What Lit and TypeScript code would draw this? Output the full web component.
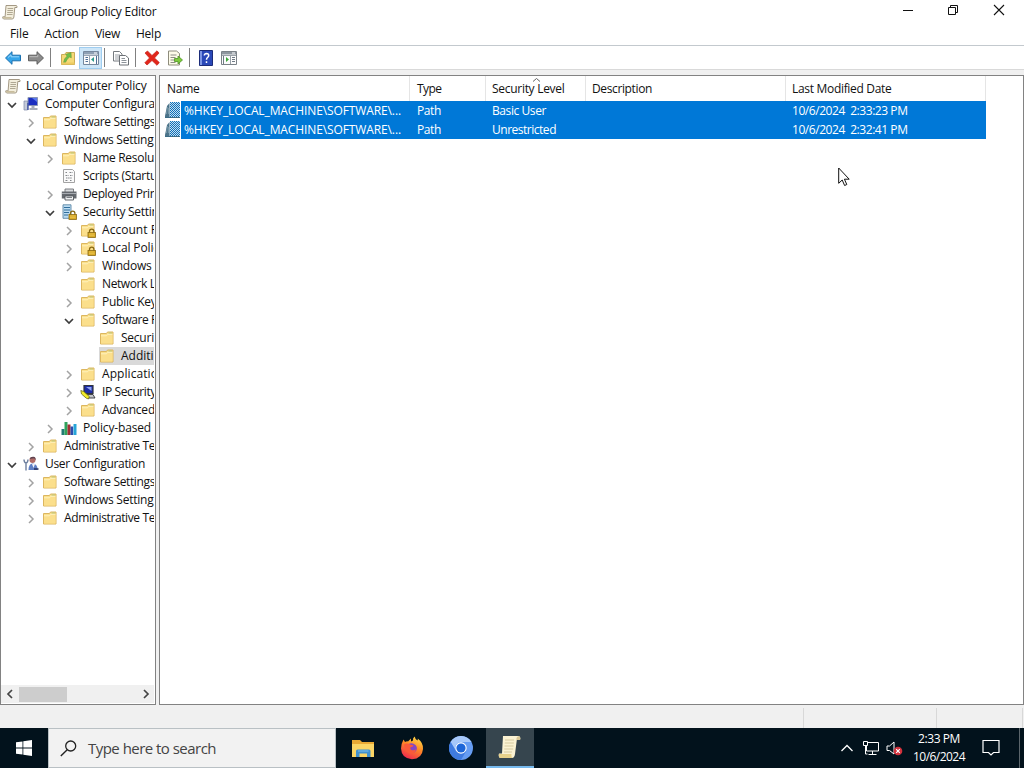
import { LitElement, html, svg, css, nothing } from "lit";
import { customElement, property } from "lit/decorators.js";

/* A text run whose tracking is adjusted so that it spans a given width. */
@customElement("fit-text")
class FitText extends LitElement {
  static styles = css`
    :host { display: inline-block; white-space: pre; flex: none; }
  `;
  @property({ type: Number }) w = 0;
  @property() text = "";
  render() {
    return html`<span>${this.text}</span>`;
  }
  updated() {
    const span = this.renderRoot.querySelector("span") as HTMLElement;
    span.style.letterSpacing = "0px";
    if (!this.w) return;
    const natural = span.getBoundingClientRect().width;
    span.style.letterSpacing = `${(this.w - natural) / this.text.length}px`;
  }
}

const t = (text: string, w: number) => html`<fit-text .text=${text} .w=${w}></fit-text>`;

const ic = (body: unknown, size = 16) =>
  html`<svg class="ic" width=${size} height=${size} viewBox="0 0 16 16">${body}</svg>`;

const scroll = svg`
  <path d="M4 1.500h10.200q1.300.4.800 2h-2.200l-.9 9.500q-.2 2-1.800 2H1.600q-1.200-.6-.8-2.200h2.300z" fill="#f3eedd" stroke="#9a8f78" stroke-width=".9"/>
  <path d="M5.600 4.500h5.600M5.400 6.500H11M5.200 8.500h5.600M5 10.500h5.500" stroke="#a89f8a" stroke-width=".9"/>
  <path d="M1 13h8.500v1.500H1.500z" fill="#c9bd9d"/>`;

const folder = svg`
  <path d="M1.500 3.500h6l1-1.500h5.500v12H1.500z" fill="#fbe08a" stroke="#dcb660"/>
  <path d="M2 6h5.500l1.300-1.500H13.500V13.500H2z" fill="#fbdf8c"/>
  <path d="M2 5.800h5.500l1.300-1.500H13.500" fill="none" stroke="#fff3c4" stroke-width=".9"/>
  <path d="M9.500 3h3.500" stroke="#a9c27a" stroke-width=".8"/>`;

const lock = svg`
  <path d="M9.500 11V9.300a2.200 2.200 0 0 1 4.400 0V11" fill="none" stroke="#8a6a14" stroke-width="1.300"/>
  <rect x="8" y="10.500" width="7.500" height="5" fill="#d9a821" stroke="#8a6a14" stroke-width=".8"/>
  <path d="M9 12h5.500M9 13.700h5.500" stroke="#f3d36b" stroke-width=".6"/>`;

const icons: Record<string, unknown> = {
  scroll,
  folder,
  lockfolder: svg`${folder}${lock}`,
  computer: svg`
    <path d="M5 1.500h9.500v8H5z" fill="#1c2fc0" stroke="#8a94b4"/>
    <path d="M9 2h5v4z" fill="#5a78ee"/>
    <path d="M8.500 10h3v2h-3zM6.500 12h8v2h-8z" fill="#a9aeb9"/>
    <path d="M1 5h3.500v9H1z" fill="#c3cad8" stroke="#7d88a6" stroke-width=".7"/>
    <path d="M5 7v7" stroke="#3449a0" stroke-width="1.300"/>`,
  user: svg`
    <circle cx="9.500" cy="4" r="3" fill="#b06b66"/>
    <path d="M6.500 3q1-2.500 4-2.200 2.500.4 2.200 3.500l-1.500-2z" fill="#5e4350"/>
    <path d="M5.500 14q0-6 4-6.500 5 .2 5.200 6.500z" fill="#5f7fc4"/>
    <path d="M9 8l1.500 4L12 8z" fill="#f3f3f8"/>
    <path d="M1 3.500q0 3 2 3.500 2-.5 2-3.500M3 7v7.500" fill="none" stroke="#6d7f9e" stroke-width="1.400"/>
    <path d="M11 13h4.500" stroke="#27315f" stroke-width="1.500"/>`,
  script: svg`
    <path d="M2.500 1.500h9l2 2v11h-11z" fill="#fafafa" stroke="#a3a3a3"/>
    <path d="M4.500 4.500h2M8.500 4.500h3M4.500 7.500h3M9 7.500h2.500M5 10h6M4.500 12.500h2.500M9 12.500h2" stroke="#83868a" stroke-dasharray="1.500 .6"/>`,
  printer: svg`
    <path d="M4 3h8.500v4H4z" fill="#d7d9dc" stroke="#6f7377" stroke-width=".9"/>
    <path d="M.8 5.500h14.700v7H.8z" fill="#65696f"/>
    <path d="M1 7.500h14" stroke="#a7abb1"/>
    <path d="M4 10h8.500v4H4z" fill="#f3f4f5" stroke="#54585d" stroke-width=".9"/>
    <path d="M5.500 11.500h5.500" stroke="#7c8085"/>`,
  server: svg`
    <path d="M2 .8h8v13.500H2z" fill="#bcdcf1" stroke="#5c87a6" stroke-width=".9"/>
    <path d="M3 3.500h6M3 6h6M3 8.500h5M3 11h4" stroke="#2e6d9c" stroke-width="1.100"/>${lock}`,
  ipsec: svg`
    <path d="M4 1.500h9v8H4z" fill="#1d2ca6" stroke="#30343c" stroke-width="1.200"/>
    <path d="M6 3h5.500v4z" fill="#8ea3f0"/>
    <path d="M6.500 10.500H13l2 3.500H8z" fill="#c3c6c9" stroke="#33363c" stroke-width=".9"/>
    <path d="M.8 6.500l3 1 5.500 5-.8 2.500-2.200-.8L1.500 10z" fill="#f1ea2a" stroke="#5c5a10" stroke-width=".7"/>`,
  bars: svg`
    <path d="M.5 9h3v6h-3z" fill="#237b74"/><path d="M3.500 2h3v13h-3z" fill="#2fa35d"/>
    <path d="M6.500 4.500h3V15h-3z" fill="#a12f35"/><path d="M9.500 6.500h2.700V15H9.500z" fill="#2d4caa"/>
    <path d="M12.500 4h3v11h-3z" fill="#27a5d8"/>`,
  back: svg`<path d="M.5 8L7 1.700v3.500h8.500v5.600H7v3.500z" fill="#35a5ea" stroke="#1a6fae"/><path d="M3 7.500l3-2.700v2h8" fill="none" stroke="#9bd6fa"/>`,
  forward: svg`<path d="M15.500 8L9 1.700v3.500H.5v5.600H9v3.500z" fill="#8b8b8b" stroke="#5c5c5c"/><path d="M1.500 6.700h8.300v-2" fill="none" stroke="#bdbdbd"/>`,
  up: svg`<path d="M1.500 4.500h3l1.500-2h8.500v12h-13z" fill="#f6d977" stroke="#c9ab57"/><path d="M3.500 12.500Q4 8.500 7.200 6L5.500 4.500l5.500-2 .3 5.300L9.600 7Q6.500 9 5.500 12.500z" fill="#6fbf4a" stroke="#6f9a3d" stroke-width=".6"/><path d="M1.500 12.500h13v2h-13z" fill="#eccb62"/>`,
  treeview: svg`<path d="M.5 1.500h15v13H.5z" fill="#fcfcfc" stroke="#75889e"/><path d="M1 2h14v2.500H1z" fill="#8ea0b4"/><path d="M11 3h3" stroke="#fff"/><path d="M6.500 5v9M1 5.500h14" stroke="#9aa7b5"/><path d="M2.500 7.500h2.500M2.500 9.500h2.500M2.500 11.500h2.500M13.500 6v8" stroke="#4f6f97"/><path d="M11 7v5L8 9.500z" fill="#2b9a8b"/>`,
  copy: svg`<path d="M.5 1.500h6l2.500 2.500v7H.5z" fill="#fff" stroke="#767b80"/><path d="M2 5h5M2 7h5M2 9h5" stroke="#9da2a8"/><path d="M6.500 5.500h6L15.500 8v7h-9z" fill="#fff" stroke="#6c7176"/><path d="M8.500 8.500h3.500M8.500 10.500h5M8.500 12.500h5" stroke="#8d939a"/>`,
  del: svg`<path d="M1 3l2.500-2L8 5.500 13 .8 15 3l-4.500 5 4.800 4.500-2.300 2.800L8 10.500 3 15 .8 12.800 5.500 8z" fill="#e2261b" stroke="#c4221a" stroke-width=".7"/>`,
  exportlist: svg`<path d="M1.500 1h8l3 2.500V15h-11z" fill="#fdfbe9" stroke="#8e8c7c"/><path d="M3.500 5h6M3.500 7.500h5M3.500 10h4M3.500 12.500h5" stroke="#8d8d86"/><path d="M7.500 8.500h3.500V6l4.500 4-4.500 4v-2.500H7.500z" fill="#7ecb3c" stroke="#4c9325" stroke-width=".8"/>`,
  pane: svg`<path d="M.5 1.500h15v13H.5z" fill="#fcfcfc" stroke="#7b8288"/><path d="M1 2h14v2.500H1z" fill="#8e979f"/><path d="M11 3h3" stroke="#fff"/><path d="M9.500 5v9M1 5.500h14" stroke="#99a1a8"/><path d="M11 7.500h3M11 9.500h3M11 11.500h3M2.500 6v8" stroke="#6f7a85"/><path d="M5 7v5l3-2.500z" fill="#3ea83a"/>`,
  policy: svg`
    <path d="M5 0h10v15H4z" fill="#c4dff0"/>
    <path d="M5 .5h10M5 2.500h10M5 4.500h10M5 6.500h10M5 8.500h10M5 10.500h10M5 12.500h10M5 14.500h10" stroke="#0f6fb8" stroke-dasharray="1 1"/>
    <path d="M6 1.500h9M6 3.500h9M6 5.500h9M6 7.500h9M6 9.500h9M6 11.500h9M6 13.500h9" stroke="#0f6fb8" stroke-dasharray="1 1"/>
    <path d="M2 4L4.500 1v14H-.2z" fill="#4b7389"/>
    <path d="M2.500 5l-1 7M3.500 6v6" stroke="#86a5b5" stroke-width=".7"/>
    <path d="M0 15.500h15" stroke="#3c6c86"/>`,
};

type Node = [level: number, state: "" | "open" | "closed", icon: string, label: string, width: number];
const nodes: Node[] = [
  [0, "", "scroll", "Local Computer Policy", 120.5],
  [1, "open", "computer", "Computer Configura", 110],
  [2, "closed", "folder", "Software Settings", 91],
  [2, "open", "folder", "Windows Setting", 89.5],
  [3, "closed", "folder", "Name Resolut", 75],
  [3, "", "script", "Scripts (Startup", 81],
  [3, "closed", "printer", "Deployed Print", 77.5],
  [3, "open", "server", "Security Settin", 75.5],
  [4, "closed", "lockfolder", "Account P", 56],
  [4, "closed", "lockfolder", "Local Polic", 57],
  [4, "closed", "folder", "Windows", 49.5],
  [4, "", "folder", "Network L", 53.5],
  [4, "closed", "folder", "Public Key", 54.5],
  [4, "open", "folder", "Software R", 56],
  [5, "", "folder", "Securit", 37],
  [5, "", "folder", "Additi", 32.5],
  [4, "closed", "folder", "Applicatio", 56],
  [4, "closed", "ipsec", "IP Security", 54],
  [4, "closed", "folder", "Advanced", 53],
  [3, "closed", "bars", "Policy-based", 68],
  [2, "closed", "folder", "Administrative Te", 91],
  [1, "open", "user", "User Configuration", 100],
  [2, "closed", "folder", "Software Settings", 91],
  [2, "closed", "folder", "Windows Setting", 89.5],
  [2, "closed", "folder", "Administrative Te", 91],
];

@customElement("app-root")
class AppRoot extends LitElement {
  static styles = css`
    :host { display: flex; flex-direction: column; width: 1024px; height: 768px; overflow: hidden; position: relative;
      background: #f0f0f0; color: #111; font: 12px/18px "Open Sans", "Noto Sans", sans-serif; cursor: default; }
    * { box-sizing: border-box; }
    svg { display: block; flex: none; }
    .title { height: 24px; background: #fff; display: flex; align-items: center; padding-left: 2px; gap: 5px; flex: none; }
    .controls { margin-left: auto; display: flex; padding-right: 2px; }
    .controls svg { margin-bottom: 4px; }
    .menu { height: 21px; background: #fff; display: flex; padding: 1px 0 0 10px; flex: none; gap: 16px; }
    .tools { height: 25px; background: #fff; border-top: 1px solid #c3c9ce; border-bottom: 1px solid #d9d9d9; display: flex; align-items: center; flex: none; padding-left: 5px; }
    .sep { width: 1px; height: 19px; background: #808080; flex: none; }
    .tool { width: 23px; height: 22px; display: flex; align-items: center; justify-content: center; flex: none; }
    .tool.on { background: #cde6f8; border: 1px solid #9fcdf0; }
    .work { display: flex; gap: 3px; height: 630px; margin-top: 5px; flex: none; }
    .tree { width: 156px; border: 1px solid #828282; background: #fff; display: flex; flex-direction: column; justify-content: space-between; padding: 1px 1px 1px 0; overflow: hidden; }
    .node { display: flex; height: 18px; align-items: center; overflow: hidden; }
    .chev { width: 16px; margin-right: 3px; display: flex; justify-content: center; flex: none; padding-top: 1px; }
    .cell { display: flex; align-items: center; gap: 6px; height: 18px; flex: none; }
    .root { gap: 5px; }
    .cell.sel { background: #d9d9d9; padding-right: 30px; }
    .hbar { height: 18px; background: #f0f0f0; display: flex; align-items: center; flex: none; }
    .thumb { width: 48px; height: 15px; background: #cdcdcd; flex: none; }
    .arrow { width: 18px; display: flex; justify-content: center; flex: none; }
    .list { flex: 1; border: 1px solid #828282; background: #fff; display: flex; flex-direction: column; }
    .grid { display: grid; grid-template-columns: 250px 76px 100px 200px 200px; }
    .head { height: 25px; }
    .h { border-right: 1px solid #e5e5e5; padding: 4px 0 0 6px; height: 25px; position: relative; }
    .h:nth-child(-n+2) { padding-left: 7px; }
    .sort { position: absolute; left: 46px; top: 1px; }
    .row { height: 19px; color: #fff; }
    .c { background: #0078d7; padding-left: 6px; height: 19px; padding-top: 1px; }
    .c:nth-child(2) { padding-left: 7px; }
    .first { display: flex; padding-left: 5px; }
    .first .c { flex: 1; padding-left: 3px; }
    .first svg { margin-top: 1px; }
    .status { flex: none; height: 23px; display: flex; justify-content: flex-end; padding-top: 3px; }
    .pane { border-left: 1px solid #d8d8d8; height: 20px; }
    .pane.a { width: 133px; } .pane.b { width: 86px; } .pane.c2 { width: 2px; }
    .bar { flex: none; height: 40px; background: #02121c; display: flex; align-items: stretch; color: #fff; }
    .start { width: 48px; display: flex; align-items: center; justify-content: center; }
    .search { width: 288px; background: #f2f2f2; border: 1px solid #b9c0c4; display: flex; align-items: center; gap: 11px; padding-left: 11px; color: #444; font-size: 15px; margin-right: 3px; }
    .app { width: 48px; display: flex; align-items: center; justify-content: center; margin-right: 1px; }
    .app.active { background: #36454e; border-bottom: 2px solid #76b9ed; }
    .tray { margin-left: auto; display: flex; align-items: center; }
    .clock { display: flex; flex-direction: column; align-items: center; width: 54px; margin: 0 16px 0 8px; line-height: 18px; }
    .edge { width: 1px; height: 40px; background: #5b656b; margin-left: 19px; margin-right: 4px; }
    .pointer { position: absolute; left: 838px; top: 167px; }
  `;

  private chevron(state: string) {
    if (state === "open")
      return html`<svg width="10" height="8" viewBox="0 0 10 8"><path d="M1 2l4 4 4-4" fill="none" stroke="#3c3c3c" stroke-width="1.700"/></svg>`;
    if (state === "closed")
      return html`<svg width="8" height="10" viewBox="0 0 8 10"><path d="M2 1l4 4-4 4" fill="none" stroke="#a3a3a3" stroke-width="1.500"/></svg>`;
    return nothing;
  }

  private node([level, state, icon, label, width]: Node) {
    return html`<div class="node">
      ${level
        ? html`<span style="width:${level * 19 - 16}px;flex:none"></span><span class="chev">${this.chevron(state)}</span>`
        : html`<span style="width:4px;flex:none"></span>`}
      <div class="cell ${level ? "" : "root"} ${label === "Additi" ? "sel" : ""}">${ic(icons[icon])}${t(label, width)}</div>
    </div>`;
  }

  private row(level: string, lw: number, date: string) {
    return html`<div class="grid row">
      <div class="first">${ic(icons.policy)}<div class="c">${t("%HKEY_LOCAL_MACHINE\\SOFTWARE\\...", 217)}</div></div>
      <div class="c">${t("Path", 24)}</div>
      <div class="c">${t(level, lw)}</div>
      <div class="c"></div>
      <div class="c">${t(date, 115.5)}</div>
    </div>`;
  }

  render() {
    const tool = (name: string, on = false) => html`<div class="tool ${on ? "on" : ""}">${ic(icons[name])}</div>`;
    const gap = (w: number) => html`<span style="width:${w}px;flex:none"></span>`;
    return html`
      <div class="title">
        ${ic(icons.scroll)}${t("Local Group Policy Editor", 133.5)}
        <div class="controls">
          <svg width="46" height="20" viewBox="0 0 46 20"><path d="M19 10.500h10" stroke="#111"/></svg>
          <svg width="46" height="20" viewBox="0 0 46 20"><path d="M18.500 7.500h7v7h-7zM20.500 7V5.500h7v7H26" fill="none" stroke="#111"/></svg>
          <svg width="46" height="20" viewBox="0 0 46 20"><path d="M18 5l10 10M28 5L18 15" stroke="#111" stroke-width="1.100"/></svg>
        </div>
      </div>
      <div class="menu">${t("File", 18.5)}${t("Action", 34.5)}${t("View", 25)}${t("Help", 25)}</div>
      <div class="tools">
        ${ic(icons.back)}${gap(7)}${ic(icons.forward)}
        ${gap(6)}<span class="sep"></span>${gap(5)}${tool("up")}${tool("treeview", true)}
        ${gap(2)}<span class="sep"></span>${gap(4)}${tool("copy")}
        ${gap(3)}<span class="sep"></span>${gap(4)}${tool("del")}${tool("exportlist")}
        ${gap(3)}<span class="sep"></span>${gap(4)}
        <div class="tool"><svg width="14" height="16" viewBox="0 0 14 16"><path d="M.5.5h13v15H.5z" fill="#2a48b8" stroke="#1b2b78"/><path d="M1 1h2v14H1z" fill="#7d95e2"/><path d="M5.300 5.500q.2-2 2.200-2 2.200.1 2.200 2 0 1.200-1.200 2-1 .8-1 2.300M7.500 11.300v1.700" fill="none" stroke="#fff" stroke-width="1.500"/></svg></div>
        ${tool("pane")}
      </div>
      <div class="work">
        <div class="tree">
          <div>${nodes.map((n) => this.node(n))}</div>
          <div class="hbar">
            <span class="arrow"><svg width="8" height="10" viewBox="0 0 8 10"><path d="M6 1L2 5l4 4" fill="none" stroke="#444" stroke-width="1.700"/></svg></span>
            <span class="thumb"></span>${gap(70)}
            <span class="arrow"><svg width="8" height="10" viewBox="0 0 8 10"><path d="M2 1l4 4-4 4" fill="none" stroke="#444" stroke-width="1.700"/></svg></span>
          </div>
        </div>
        <div class="list">
          <div class="grid head">
            <div class="h">${t("Name", 32.5)}</div>
            <div class="h">${t("Type", 24.5)}</div>
            <div class="h">${t("Security Level", 72.5)}<svg class="sort" width="9" height="6" viewBox="0 0 9 6"><path d="M1 4.500l3.500-3 3.500 3" fill="none" stroke="#666"/></svg></div>
            <div class="h">${t("Description", 60)}</div>
            <div class="h">${t("Last Modified Date", 99.5)}</div>
          </div>
          ${this.row("Basic User", 54, "10/6/2024  2:33:23 PM")}
          ${this.row("Unrestricted", 64, "10/6/2024  2:32:41 PM")}
        </div>
      </div>
      <div class="status"><div class="pane a"></div><div class="pane b"></div><div class="pane c2"></div></div>
      <div class="bar">
        <div class="start"><svg width="16" height="16" viewBox="0 0 16 16"><path d="M0 2.300L6.500 1.400v6.200H0zM7.300 1.200L16 0v7.600H7.300zM0 8.400h6.500v6.200L0 13.700zM7.300 8.400H16V16l-8.700-1.200z" fill="#fff"/></svg></div>
        <div class="search">
          <svg width="17" height="17" viewBox="0 0 17 17"><circle cx="10.700" cy="6" r="5" fill="none" stroke="#222" stroke-width="1.300"/><path d="M7.200 9.700L.8 16" stroke="#222" stroke-width="1.400"/></svg>
          ${t("Type here to search", 128)}
        </div>
        <div class="app"><svg width="22" height="19" viewBox="0 0 22 19"><path d="M0 1h8l2 2h12v15H0z" fill="#e9a934"/><path d="M0 5h22v13H0z" fill="#fbd565"/><path d="M4 18v-6q0-1.500 1.500-1.500h11.500q1.500 0 1.500 1.500v6h-3.500v-3.500H7.500V18z" fill="#4191cf"/><path d="M6 12h10.500" stroke="#7fc1ee"/></svg></div>
        <div class="app"><svg width="24" height="24" viewBox="0 0 24 24">
          <defs><linearGradient id="ff" x1=".8" y1="0" x2=".3" y2="1"><stop offset="0" stop-color="#ffe14a"/><stop offset=".45" stop-color="#ff8a26"/><stop offset="1" stop-color="#f0284e"/></linearGradient></defs>
          <path d="M3.500 3.500l1.500 2.500q1.500-.8 3-.6l3-2.900v3l2-1Q12.500 2 14.700.5q.3 2.500 2.800 4 .5-1 .3-2 5.700 4.500 5.200 10.500-.8 9.800-11 10.200Q1.500 22.600 1 12.500q0-4.500 2.500-9z" fill="url(#ff)"/>
          <path d="M8 8.500q4-2.500 7.500.5 2.500 3 .5 6-2.500 3-6 1.500-3.500-2-2-8z" fill="#8447c4"/>
          <path d="M4 8.500q3-2 6.500.3l3 .4q-.5 2-3 2-.8 2.500 2 3 2.500.2 3.500-1-1 5-6 4.300-5.500-1.500-6-9z" fill="#fa5a3a"/></svg></div>
        <div class="app"><svg width="24" height="24" viewBox="0 0 24 24"><circle cx="12" cy="12" r="12" fill="#669df3"/><path d="M1.600 6A12 12 0 0 1 22.400 6H12A6 6 0 0 0 6.500 14z" fill="#a6c8fa"/><path d="M1.600 6A12 12 0 0 0 12 24l5.200-9H7z" fill="#3f7be0"/><circle cx="12" cy="12" r="5.700" fill="#fff"/><circle cx="12" cy="12" r="4.600" fill="#1d66d8"/></svg></div>
        <div class="app active"><svg width="24" height="24" viewBox="0 0 24 24"><path d="M5 1h16q2 1 1 4h-3.200L17 19q-.5 4-3 4H2q-2-1-1-4.500h3z" fill="#fbf2d2"/><path d="M1 19h12.500q-.5 3 1 4H2q-1.500-1-1-4z" fill="#e8d28b"/><path d="M18.500 5q-.5-3 2-4 2.500.7 1.600 4z" fill="#d9c795"/><path d="M7 5h9M6.800 8h9M6.500 11h9M6.200 14h9M6 17h8" stroke="#d3c69b" stroke-width=".9"/></svg></div>
        <div class="tray">
          <svg width="14" height="10" viewBox="0 0 14 10"><path d="M1.500 8L7 2.500 12.500 8" fill="none" stroke="#fff" stroke-width="1.300"/></svg>
          ${gap(8)}
          <svg width="18" height="16" viewBox="0 0 18 16"><path d="M5 2.500h11.500v8.500H4.500V6M10.500 11v3M6.500 14.500h8M1.500 1.500h4v4h-4zM3.500 5.500v8.500h2" fill="none" stroke="#fff"/></svg>
          ${gap(6)}
          <svg width="18" height="16" viewBox="0 0 18 16"><path d="M1 6h2.500L8 2v12L3.500 10.500H1z" fill="none" stroke="#fff"/><circle cx="12" cy="11" r="4.300" fill="#d3313c"/><path d="M10.200 9.200l3.600 3.600M13.800 9.200l-3.600 3.600" stroke="#fff" stroke-width="1.200"/></svg>
          <div class="clock">${t("2:33 PM", 42)}${t("10/6/2024", 52)}</div>
          <svg width="18" height="18" viewBox="0 0 18 18"><path d="M1 1.500h16v12h-5.500L9 16l-2.500-2.500H1z" fill="none" stroke="#fff" stroke-width="1.200"/></svg>
          <span class="edge"></span>
        </div>
      </div>
      <svg class="pointer" width="13" height="20" viewBox="0 0 13 20"><path d="M.7 1v15.300l3.500-3.300 2.400 5.500 2.200-1-2.400-5.300h4.800z" fill="#fff" stroke="#111" stroke-width="1"/></svg>
    `;
  }
}
